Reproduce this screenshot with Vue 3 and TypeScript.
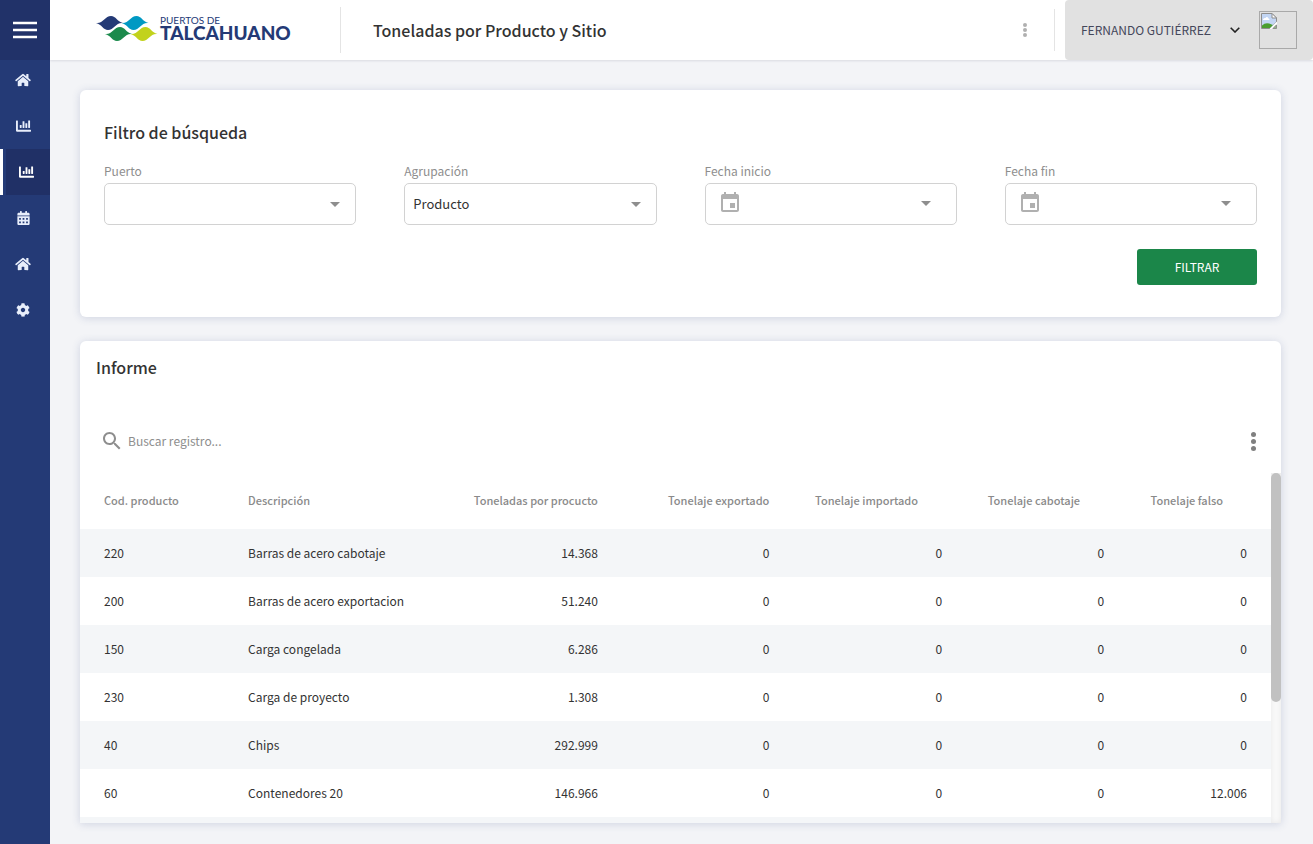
<script setup lang="ts">
import { ref } from 'vue'

interface NavItem {
  label: string
  viewBox: string
  width: number
  path: string
  active?: boolean
}

interface Row {
  code: string
  description: string
  values: string[]
}

const home =
  'M280.37 148.26L96 300.11V464a16 16 0 0 0 16 16l112.06-.29a16 16 0 0 0 15.92-16V368a16 16 0 0 1 16-16h64a16 16 0 0 1 16 16v95.64a16 16 0 0 0 16 16.05L464 480a16 16 0 0 0 16-16V300L295.67 148.26a12.19 12.19 0 0 0-15.3 0zM571.6 251.47L488 182.56V44.05a12 12 0 0 0-12-12h-56a12 12 0 0 0-12 12v72.61L318.47 43a48 48 0 0 0-61 0L4.34 251.47a12 12 0 0 0-1.6 16.9l25.5 31A12 12 0 0 0 45.15 301l235.22-193.74a12.19 12.19 0 0 1 15.3 0L530.9 301a12 12 0 0 0 16.9-1.6l25.5-31a12 12 0 0 0-1.7-16.93z'
const chart =
  'M332.8 320h38.4c6.4 0 12.8-6.4 12.8-12.8V172.8c0-6.4-6.4-12.8-12.8-12.8h-38.4c-6.4 0-12.8 6.4-12.8 12.8v134.4c0 6.4 6.4 12.8 12.8 12.8zm96 0h38.4c6.4 0 12.8-6.4 12.8-12.8V76.8c0-6.4-6.4-12.8-12.8-12.8h-38.4c-6.4 0-12.8 6.4-12.8 12.8v230.4c0 6.4 6.4 12.8 12.8 12.8zm-288 0h38.4c6.4 0 12.8-6.4 12.8-12.8v-70.4c0-6.4-6.4-12.8-12.8-12.8h-38.4c-6.4 0-12.8 6.4-12.8 12.8v70.4c0 6.4 6.4 12.8 12.8 12.8zm96 0h38.4c6.4 0 12.8-6.4 12.8-12.8V108.8c0-6.4-6.4-12.8-12.8-12.8h-38.4c-6.4 0-12.8 6.4-12.8 12.8v198.4c0 6.4 6.4 12.8 12.8 12.8zM496 384H64V80c0-8.84-7.16-16-16-16H16C7.16 64 0 71.16 0 80v336c0 17.67 14.33 32 32 32h464c8.84 0 16-7.16 16-16v-32c0-8.84-7.16-16-16-16z'
const calendar =
  'M0 464c0 26.500 21.500 48 48 48h352c26.500 0 48-21.500 48-48V192H0v272zM320 256h64v64h-64zM320 384h64v64h-64zM192 256h64v64h-64zM192 384h64v64h-64zM64 256h64v64H64zM64 384h64v64H64zM400 64h-48V16c0-8.800-7.200-16-16-16h-32c-8.800 0-16 7.200-16 16v48H160V16c0-8.800-7.200-16-16-16h-32c-8.800 0-16 7.200-16 16v48H48C21.500 64 0 85.500 0 112v48h448v-48c0-26.500-21.500-48-48-48z'
const cog =
  'M487.4 315.7l-42.6-24.6c4.3-23.2 4.3-47 0-70.2l42.6-24.6c4.9-2.8 7.1-8.6 5.5-14-11.1-35.6-30-67.8-54.7-94.6-3.8-4.1-10-5.1-14.8-2.3L380.8 110c-17.9-15.4-38.5-27.3-60.8-35.1V25.8c0-5.6-3.9-10.5-9.4-11.7-36.7-8.2-74.3-7.8-109.2 0-5.5 1.2-9.4 6.1-9.4 11.7V75c-22.2 7.9-42.8 19.8-60.8 35.1L88.7 85.5c-4.9-2.8-11-1.9-14.8 2.3-24.7 26.7-43.6 58.9-54.7 94.6-1.7 5.4.6 11.2 5.5 14L67.3 221c-4.3 23.2-4.3 47 0 70.2l-42.6 24.6c-4.9 2.8-7.1 8.6-5.5 14 11.1 35.6 30 67.8 54.7 94.6 3.8 4.1 10 5.1 14.8 2.3l42.6-24.6c17.9 15.4 38.5 27.3 60.8 35.1v49.2c0 5.6 3.9 10.5 9.4 11.7 36.7 8.2 74.3 7.8 109.2 0 5.5-1.2 9.4-6.1 9.4-11.7v-49.2c22.2-7.9 42.8-19.8 60.8-35.1l42.6 24.6c4.900 2.800 11 1.900 14.800-2.300 24.700-26.700 43.600-58.900 54.700-94.600 1.500-5.500-.7-11.300-5.600-14.100zM256 336c-44.100 0-80-35.900-80-80s35.900-80 80-80 80 35.900 80 80-35.900 80-80 80z'

const nav: NavItem[] = [
  { label: 'Inicio', viewBox: '0 0 576 512', width: 16, path: home },
  { label: 'Estadísticas', viewBox: '0 32 512 448', width: 15, path: chart },
  { label: 'Toneladas', viewBox: '0 32 512 448', width: 15, path: chart, active: true },
  { label: 'Calendario', viewBox: '0 0 448 512', width: 13, path: calendar },
  { label: 'Terminal', viewBox: '0 0 576 512', width: 16, path: home },
  { label: 'Configuración', viewBox: '0 0 512 512', width: 14, path: cog },
]

const wave = 'M0 7C7 8 9 0 15 0C20 0 21 5.500 27 7C20 6 18 14 12 14C7 14 6 8.500 0 7Z'

const puerto = ref('')
const agrupacion = ref('Producto')
const inicio = ref('')
const fin = ref('')
const search = ref('')

const rows: Row[] = [
  { code: '220', description: 'Barras de acero cabotaje', values: ['14.368', '0', '0', '0', '0'] },
  { code: '200', description: 'Barras de acero exportacion', values: ['51.240', '0', '0', '0', '0'] },
  { code: '150', description: 'Carga congelada', values: ['6.286', '0', '0', '0', '0'] },
  { code: '230', description: 'Carga de proyecto', values: ['1.308', '0', '0', '0', '0'] },
  { code: '40', description: 'Chips', values: ['292.999', '0', '0', '0', '0'] },
  { code: '60', description: 'Contenedores 20', values: ['146.966', '0', '0', '0', '12.006'] },
]
</script>

<template>
  <div class="app">
    <aside class="sidebar">
      <button class="burger" type="button" aria-label="Menú">
        <svg width="24" height="18" viewBox="0 0 24 18"><path d="M0 2H24M0 9H24M0 16H24" stroke="#fff" stroke-width="2.500" /></svg>
      </button>
      <nav>
        <a v-for="item in nav" :key="item.label" href="#" class="nav-item" :class="{ active: item.active }" :aria-label="item.label">
          <svg :viewBox="item.viewBox" :width="item.width" height="14"><path :d="item.path" fill="currentColor" fill-rule="evenodd" /></svg>
        </a>
      </nav>
    </aside>

    <div class="main">
      <header class="topbar">
        <a class="logo" href="#" aria-label="Puertos de Talcahuano">
          <svg width="62" height="26" viewBox="0 0 62 26">
            <path :d="wave" fill="#243a76" />
            <path :d="wave" fill="#0099c3" transform="translate(25.500 0)" />
            <path :d="wave" fill="#1b8a4c" transform="translate(9 11)" />
            <path :d="wave" fill="#c2d21c" transform="translate(34.500 11)" />
          </svg>
          <span class="logo-text">
            <span class="logo-small">PUERTOS DE</span>
            <span class="logo-big">TALCAHUANO</span>
          </span>
        </a>
        <h1>Toneladas por Producto y Sitio</h1>
        <button class="kebab top-kebab" type="button" aria-label="Opciones"><i></i><i></i><i></i></button>
        <button class="user" type="button">
          <span class="user-name">FERNANDO GUTIÉRREZ</span>
          <svg width="10" height="6" viewBox="0 0 10 6"><path d="M0.700 0.700L5 5L9.300 0.700" fill="none" stroke="#222" stroke-width="1.600" /></svg>
          <span class="avatar">
            <svg width="16" height="16" viewBox="0 0 16 16">
              <path d="M.5.500H11L15.500 5V9L9 15.500H.5Z" fill="#c3d6f4" stroke="#8e8e8e" />
              <path d="M2 6.500Q2.500 4.500 4.500 5Q6 3 7.500 5.500Q8.500 5.500 8.500 7H2Z" fill="#fff" />
              <path d="M1 15V12.500Q5 8.500 10.500 11.500L12 12L9 15Z" fill="#4a9e30" />
              <path d="M11 .5V5H15.500Z" fill="#fff" stroke="#8e8e8e" />
              <path d="M16 8.500L8.500 16H10.500L16 10.500Z" fill="#fff" />
              <path d="M12 15.500H15.500V12Z" fill="#8fbf7d" stroke="#8e8e8e" />
            </svg>
          </span>
        </button>
      </header>

      <main class="content">
        <section class="card filter">
          <h2>Filtro de búsqueda</h2>
          <form class="fields" @submit.prevent>
            <div class="field">
              <label for="puerto">Puerto</label>
              <div class="control">
                <select id="puerto" v-model="puerto"><option value=""></option></select>
                <svg class="caret" width="10" height="5" viewBox="0 0 10 5"><path d="M0 0H10L5 5Z" fill="#8e8e8e" /></svg>
              </div>
            </div>
            <div class="field">
              <label for="agrupacion">Agrupación</label>
              <div class="control">
                <select id="agrupacion" v-model="agrupacion"><option>Producto</option></select>
                <svg class="caret" width="10" height="5" viewBox="0 0 10 5"><path d="M0 0H10L5 5Z" fill="#8e8e8e" /></svg>
              </div>
            </div>
            <div class="field">
              <label for="inicio">Fecha inicio</label>
              <div class="control date">
                <svg width="24" height="24" viewBox="0 0 24 24"><path d="M17 12h-5v5h5v-5zM16 1v2H8V1H6v2H5c-1.110 0-1.990.9-1.990 2L3 19c0 1.100.89 2 2 2h14c1.100 0 2-.9 2-2V5c0-1.100-.9-2-2-2h-1V1h-2zm3 18H5V8h14v11z" fill="#b0b0b0" /></svg>
                <input id="inicio" v-model="inicio" type="text" />
                <button type="button" aria-label="Abrir fecha inicio"><svg width="10" height="5" viewBox="0 0 10 5"><path d="M0 0H10L5 5Z" fill="#8e8e8e" /></svg></button>
              </div>
            </div>
            <div class="field">
              <label for="fin">Fecha fin</label>
              <div class="control date">
                <svg width="24" height="24" viewBox="0 0 24 24"><path d="M17 12h-5v5h5v-5zM16 1v2H8V1H6v2H5c-1.110 0-1.990.9-1.990 2L3 19c0 1.100.89 2 2 2h14c1.100 0 2-.9 2-2V5c0-1.100-.9-2-2-2h-1V1h-2zm3 18H5V8h14v11z" fill="#b0b0b0" /></svg>
                <input id="fin" v-model="fin" type="text" />
                <button type="button" aria-label="Abrir fecha fin"><svg width="10" height="5" viewBox="0 0 10 5"><path d="M0 0H10L5 5Z" fill="#8e8e8e" /></svg></button>
              </div>
            </div>
            <button class="submit" type="submit">FILTRAR</button>
          </form>
        </section>

        <section class="card report">
          <h2>Informe</h2>
          <div class="toolbar">
            <label for="search" aria-label="Buscar registro">
              <svg width="24" height="24" viewBox="0 0 24 24"><path d="M15.500 14h-.79l-.28-.27C15.410 12.590 16 11.110 16 9.500 16 5.910 13.090 3 9.500 3S3 5.910 3 9.500 5.910 16 9.500 16c1.610 0 3.090-.59 4.230-1.570l.27.28v.79l5 4.990L20.490 19l-4.990-5zm-6 0C7.010 14 5 11.990 5 9.500S7.010 5 9.500 5 14 7.010 14 9.500 11.990 14 9.500 14z" fill="#8e8e8e" /></svg>
            </label>
            <input id="search" v-model="search" type="text" placeholder="Buscar registro..." />
            <button class="kebab" type="button" aria-label="Más opciones"><i></i><i></i><i></i></button>
          </div>
          <div class="table-area">
            <div class="scroller">
              <table>
                <colgroup>
                  <col class="c-code" /><col class="c-desc" /><col class="c-ton" /><col class="c-exp" /><col class="c-imp" /><col class="c-cab" /><col class="c-fal" />
                </colgroup>
                <thead>
                  <tr>
                    <th scope="col">Cod. producto</th>
                    <th scope="col">Descripción</th>
                    <th scope="col" class="num">Toneladas por procucto</th>
                    <th scope="col" class="num">Tonelaje exportado</th>
                    <th scope="col" class="num sortable">Tonelaje importado</th>
                    <th scope="col" class="num sortable">Tonelaje cabotaje</th>
                    <th scope="col" class="num sortable">Tonelaje falso</th>
                  </tr>
                </thead>
                <tbody>
                  <tr v-for="row in rows" :key="row.code">
                    <td>{{ row.code }}</td>
                    <td>{{ row.description }}</td>
                    <td v-for="(value, i) in row.values" :key="i" class="num">{{ value }}</td>
                  </tr>
                  <tr><td colspan="7"></td></tr>
                </tbody>
              </table>
            </div>
            <div class="track"><div class="thumb"></div></div>
          </div>
        </section>
      </main>
    </div>
  </div>
</template>

<style>
body {
  margin: 0;
}
</style>

<style scoped>
* {
  box-sizing: border-box;
}

.app {
  display: flex;
  height: 100vh;
  min-height: 640px;
  background: #f3f4f7;
  color: #333;
  font-family: 'Noto Sans CJK SC', 'Noto Sans', sans-serif;
  font-size: 12px;
}

svg {
  display: block;
  flex: none;
}

button,
input,
select {
  padding: 0;
  border: 0;
  background: none;
  color: inherit;
  font: inherit;
}

.sidebar {
  flex: none;
  width: 50px;
  background: #243a76;
}

.burger {
  display: flex;
  align-items: center;
  justify-content: center;
  position: relative;
  z-index: 1;
  width: 100%;
  height: 60px;
  background: #213269;
}

nav {
  margin-top: -3px;
}

.nav-item {
  display: flex;
  align-items: center;
  justify-content: center;
  height: 46px;
  padding-right: 4px;
  color: #e8eefb;
}

.nav-item.active {
  padding-right: 1px;
  border-left: 3px solid #fff;
  background: #203066;
  box-shadow: inset 3px 0 #243a76;
  color: #fff;
}

.main {
  flex: 1;
  display: flex;
  flex-direction: column;
  min-width: 0;
}

.topbar {
  flex: none;
  display: flex;
  align-items: center;
  height: 60px;
  background: #fff;
  box-shadow: 0 1px 2px rgba(40, 50, 80, 0.12);
}

.logo {
  display: flex;
  gap: 2px;
  width: 291px;
  height: 46px;
  padding: 9px 0 0 46px;
  border-right: 1px solid #e4e4e4;
  color: #243a76;
  text-decoration: none;
}

.logo-text {
  display: flex;
  flex-direction: column;
  font-family: Lato, sans-serif;
  white-space: nowrap;
}

.logo-small {
  font-size: 10px;
  font-weight: 400;
  line-height: 8px;
}

.logo-big {
  font-size: 19px;
  font-weight: 900;
  line-height: 18px;
}

h1,
h2 {
  margin: 0;
  font-size: 16px;
  font-weight: 500;
  line-height: 24px;
}

h1 {
  flex: 1;
  padding-left: 32px;
}

.kebab {
  display: flex;
  flex-direction: column;
  align-items: center;
  justify-content: center;
  gap: 2px;
  width: 24px;
  height: 24px;
}

.kebab i {
  width: 5px;
  height: 5px;
  border-radius: 50%;
  background: #808080;
}

.top-kebab {
  width: 58px;
  height: 42px;
  gap: 1px;
  border-right: 1px solid #e4e4e4;
  margin-right: 10px;
}

.top-kebab i {
  width: 4px;
  height: 4px;
  background: #b0b0b0;
}

.user {
  display: flex;
  align-items: center;
  gap: 19px;
  height: 60px;
  padding: 0 16px;
  border-radius: 4px;
  background: #e1e1e1;
  color: #44475a;
}

.user-name {
  padding-bottom: 2px;
}

.avatar {
  width: 38px;
  height: 38px;
  padding: 1px;
  border: 1px solid #a9a9a9;
}

.content {
  flex: 1;
  display: flex;
  flex-direction: column;
  gap: 24px;
  min-height: 0;
  padding: 30px 32px 21px 30px;
}

.card {
  border-radius: 6px;
  background: #fff;
  box-shadow: 0 1px 8px rgba(60, 80, 140, 0.2);
}

.filter {
  padding: 30px 24px 32px;
}

.fields {
  display: grid;
  grid-template-columns: repeat(4, minmax(0, 1fr));
  gap: 24px 48px;
  padding-top: 17px;
}

.field label {
  display: block;
  padding-bottom: 2px;
  color: #8e8e8e;
  line-height: 20px;
}

.control {
  display: grid;
  align-items: center;
  height: 42px;
  border: 1px solid #d2d2d2;
  border-radius: 5px;
}

.control select {
  grid-area: 1 / 1;
  width: 100%;
  height: 100%;
  padding: 0 0 2px 8px;
  appearance: none;
  font-size: 13px;
}

.caret {
  grid-area: 1 / 1;
  justify-self: end;
  margin-right: 15px;
  pointer-events: none;
}

.control.date {
  display: flex;
  padding: 0 16px 2px 12px;
}

.date input {
  flex: 1;
  min-width: 0;
}

.date button {
  display: flex;
  align-items: center;
  justify-content: center;
  width: 28px;
  height: 24px;
}

.submit {
  grid-column: 4;
  justify-self: end;
  width: 120px;
  height: 36px;
  padding-bottom: 2px;
  border-radius: 3px;
  background: #1b8649;
  color: #fff;
}

.report {
  flex: 1;
  display: flex;
  flex-direction: column;
  min-height: 0;
  overflow: hidden;
  border-radius: 6px 6px 0 0;
}

.report h2 {
  padding: 14px 16px 0;
}

.toolbar {
  display: flex;
  align-items: center;
  gap: 8px;
  height: 64px;
  margin-top: 30px;
  padding: 0 16px 0 20px;
}

.toolbar input {
  flex: 1;
  min-width: 0;
  height: 24px;
  margin-left: -4px;
  padding-bottom: 2px;
}

.toolbar input::placeholder {
  color: #8e8e8e;
}

.table-area {
  flex: 1;
  display: flex;
  min-height: 0;
}

.scroller {
  flex: 1;
  min-width: 0;
  overflow: hidden;
}

table {
  width: 100%;
  border-collapse: collapse;
  table-layout: fixed;
}

.c-code { width: 12.1%; }
.c-desc { width: 19.1%; }
.c-ton { width: 14.3%; }
.c-exp { width: 14.4%; }
.c-imp { width: 14.5%; }
.c-cab { width: 13.6%; }
.c-fal { width: 12%; }

th,
td {
  height: 48px;
  padding: 0 24px 2px;
  text-align: left;
  white-space: nowrap;
}

th {
  height: 56px;
  color: #8a8a8a;
  font-size: 11px;
  font-weight: 500;
}

.num {
  padding-left: 0;
  text-align: right;
}

.sortable {
  padding-right: 48px;
}

tbody tr:nth-child(odd) {
  background: #f4f6f8;
}

.track {
  flex: none;
  width: 10px;
  background: #fafafa;
  box-shadow: inset 0 0 6px rgba(0, 0, 0, 0.08);
}

.thumb {
  height: 65.4%;
  border-radius: 5px;
  background: #c1c1c1;
}
</style>
